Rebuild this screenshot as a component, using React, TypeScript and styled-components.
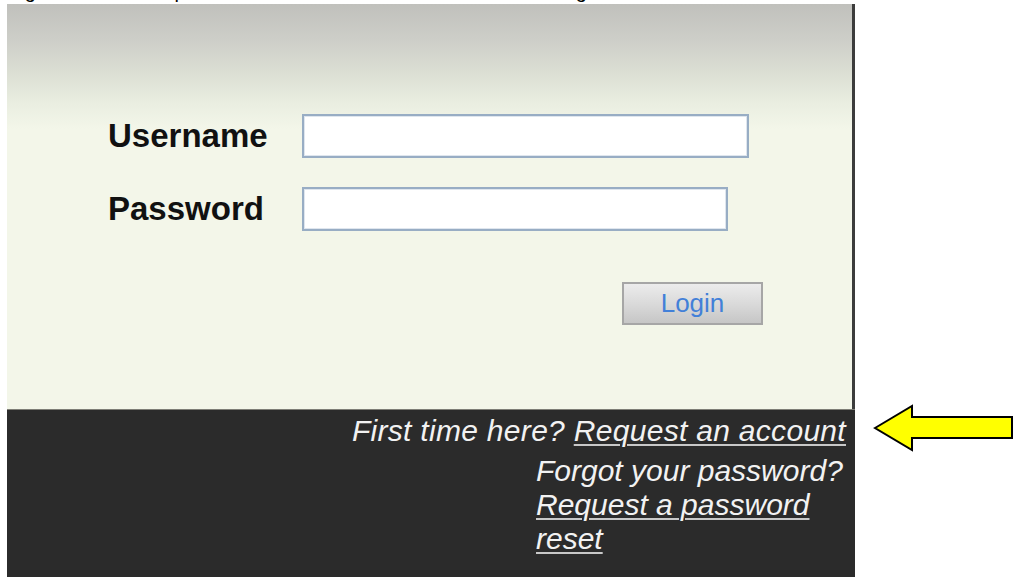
import React from 'react';
import styled, { createGlobalStyle } from 'styled-components';

const GlobalStyle = createGlobalStyle`
  html, body {
    margin: 0;
    padding: 0;
    background: #ffffff;
    overflow: hidden;
  }
  body {
    font-family: "Liberation Sans", Arial, sans-serif;
  }
`;

const Page = styled.div`
  position: relative;
  width: 1015px;
  height: 577px;
  overflow: hidden;
`;

// only the tail of the caption line above the panel is in view
const Caption = styled.p`
  margin: -22px 0 0 8px;
  height: 26px;
  font-size: 20px;
  line-height: 26px;
  color: #000000;
  white-space: nowrap;
`;

const Panel = styled.div`
  display: flex;
  flex-direction: column;
  width: 848px;
  height: 580px;
  margin-left: 7px;
`;

const FormArea = styled.div`
  display: flex;
  flex-direction: column;
  height: 405px;
  box-sizing: border-box;
  padding: 110px 0 0 101px;
  border-right: 3px solid #3c3c3c;
  background: linear-gradient(
    to bottom,
    #c0c0bc 0px,
    #cdcec8 35px,
    #dcdfd4 70px,
    #eaeee1 100px,
    #f3f6e9 125px,
    #f3f6e9 100%
  );
`;

const FieldRow = styled.div<{ $gap?: number }>`
  display: flex;
  align-items: center;
  margin-bottom: ${({ $gap }) => $gap ?? 0}px;
`;

const Label = styled.label`
  width: 194px;
  font-size: 33px;
  font-weight: bold;
  color: #111111;
`;

const TextInput = styled.input<{ $width: number }>`
  box-sizing: border-box;
  width: ${({ $width }) => $width}px;
  height: 44px;
  margin: 0;
  border: 2px solid #98adc4;
  box-shadow: inset 0 0 0 1px #dfe6ee;
  background: #ffffff;
  outline: none;
`;

const ButtonRow = styled.div`
  display: flex;
  padding: 51px 0 0 514px;
`;

const LoginButton = styled.button`
  box-sizing: border-box;
  width: 141px;
  height: 43px;
  border: 2px solid #a6a6a6;
  border-radius: 0;
  background: linear-gradient(to bottom, #ececec, #d8d8d8 55%, #c6c6c6);
  font-family: "Liberation Sans", Arial, sans-serif;
  font-size: 26px;
  color: #4280d8;
  padding: 0;
  cursor: pointer;
`;

const Footer = styled.div`
  flex: 1;
  display: flex;
  flex-direction: column;
  align-items: flex-end;
  padding: 4px 9px 0 0;
  border-top: 1px solid #7e7e76;
  background: #2b2b2b;
  font-size: 30px;
  font-style: italic;
  line-height: 33px;
  color: #f2f2f2;
`;

const Line = styled.div`
  white-space: nowrap;
  letter-spacing: 0.3px;
`;

const HelpBlock = styled.div`
  width: 310px;
  margin-top: 7px;
  line-height: 34px;
  text-align: left;
`;

const FooterLink = styled.a`
  color: #f2f2f2;
  text-decoration: underline;
  text-decoration-color: #c8c8c8;
  text-decoration-thickness: 2px;
  text-underline-offset: 3px;
`;

const Pointer = styled.svg`
  position: absolute;
  left: 872px;
  top: 403px;
`;

const CalloutArrow = () => (
  <Pointer width="143" height="50" viewBox="0 0 143 50">
    <path
      d="M3 25 L40 3 L40 14 L140 14 L140 35 L40 35 L40 47 Z"
      fill="#ffff00"
      stroke="#000000"
      strokeWidth="2"
      strokeLinejoin="miter"
    />
  </Pointer>
);

const App = () => (
  <Page>
    <GlobalStyle />
    <Caption>Figure 3: The new portal home screen with the account link and guidance</Caption>
    <Panel>
      <FormArea>
        <FieldRow $gap={29}>
          <Label htmlFor="username">Username</Label>
          <TextInput id="username" type="text" $width={447} />
        </FieldRow>
        <FieldRow>
          <Label htmlFor="password">Password</Label>
          <TextInput id="password" type="password" $width={426} />
        </FieldRow>
        <ButtonRow>
          <LoginButton type="button">Login</LoginButton>
        </ButtonRow>
      </FormArea>
      <Footer>
        <Line>
          First time here? <FooterLink href="#">Request an account</FooterLink>
        </Line>
        <HelpBlock>
          Forgot your password?
          <br />
          <FooterLink href="#">Request a password reset</FooterLink>
        </HelpBlock>
      </Footer>
    </Panel>
    <CalloutArrow />
  </Page>
);

export default App;
